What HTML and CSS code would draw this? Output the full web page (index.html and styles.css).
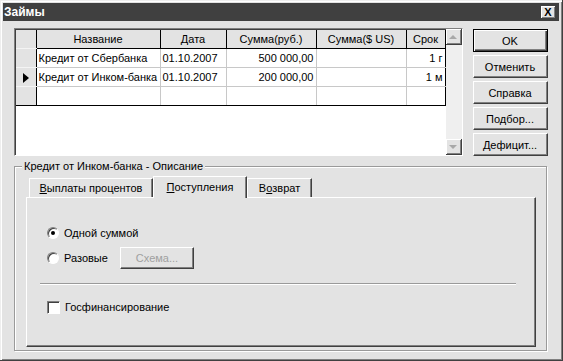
FILE: index.html
```html
<!DOCTYPE html>
<html lang="ru">
<head>
    <meta charset="UTF-8">
    <title>Займы</title>
    <link rel="stylesheet" href="styles.css">
</head>
<body>

    <div class="window">

        <div class="titlebar">
            <span class="title-text">Займы</span>
            <span class="close-btn">X</span>
        </div>

        <div class="content">

            <div class="top-row">

                <div class="grid">
                    <div class="grid-body">
                        <table class="loans">
                            <colgroup>
                                <col class="c-ind">
                                <col class="c-name">
                                <col class="c-date">
                                <col class="c-sum">
                                <col class="c-usd">
                                <col class="c-term">
                            </colgroup>
                            <tr class="head">
                                <td class="ind"></td>
                                <td>Название</td>
                                <td>Дата</td>
                                <td>Сумма(руб.)</td>
                                <td>Сумма($ US)</td>
                                <td class="last">Срок</td>
                            </tr>
                            <tr>
                                <td class="ind"></td>
                                <td>Кредит от Сбербанка</td>
                                <td>01.10.2007</td>
                                <td class="num">500 000,00</td>
                                <td></td>
                                <td class="num last">1 г</td>
                            </tr>
                            <tr>
                                <td class="ind"><span class="arrow"></span></td>
                                <td>Кредит от Инком-банка</td>
                                <td>01.10.2007</td>
                                <td class="num">200 000,00</td>
                                <td></td>
                                <td class="num last">1 м</td>
                            </tr>
                            <tr class="end">
                                <td class="ind"></td>
                                <td></td>
                                <td></td>
                                <td></td>
                                <td></td>
                                <td class="last"></td>
                            </tr>
                        </table>
                    </div>
                    <div class="scrollbar">
                        <div class="sb-btn"><span class="tri-up"></span></div>
                        <div class="sb-track"></div>
                        <div class="sb-btn"><span class="tri-down"></span></div>
                    </div>
                </div>

                <div class="buttons">
                    <div class="btn default">OK</div>
                    <div class="btn">Отменить</div>
                    <div class="btn">Справка</div>
                    <div class="btn">Подбор...</div>
                    <div class="btn">Дефицит...</div>
                </div>

            </div>

            <div class="group">
                <div class="group-label">Кредит от Инком-банка - Описание</div>

                <div class="tabs">
                    <div class="tab tab-pay"><u>В</u>ыплаты процентов</div>
                    <div class="tab active"><u>П</u>оступления</div>
                    <div class="tab tab-back">В<u>о</u>зврат</div>
                </div>

                <div class="panel">
                    <div class="option">
                        <span class="radio checked"></span>
                        <span>Одной суммой</span>
                    </div>
                    <div class="option">
                        <span class="radio"></span>
                        <span class="opt-label">Разовые</span>
                        <span class="btn small disabled">Схема...</span>
                    </div>
                    <div class="separator"></div>
                    <div class="option">
                        <span class="checkbox"></span>
                        <span>Госфинансирование</span>
                    </div>
                </div>
            </div>

        </div>

    </div>

</body>
</html>
```

FILE: styles.css
```css
body{
    margin: 0;
    background-color: #e3e3e3;
    font-family: "Liberation Sans", Arial, sans-serif;
    font-size: 11px;
    color: #000;
}

.window{
    width: 563px;
    height: 361px;
    box-sizing: border-box;
    padding: 3px 3px 0 3px;
    background-color: #e3e3e3;
    border-right: 1px solid #404040;
    border-bottom: 1px solid #404040;
    box-shadow: inset 1px 1px 0 #eeeeee, inset 2px 2px 0 #ffffff, inset -1px -1px 0 #808080;
}

/* title bar */

.titlebar{
    height: 18px;
    background-color: #404040;
    display: flex;
    align-items: center;
    justify-content: space-between;
    padding: 0 3px 0 1px;
}

.title-text{
    color: #ffffff;
    font-weight: bold;
    font-size: 12px;
}

.close-btn{
    width: 14px;
    height: 12px;
    line-height: 12px;
    text-align: center;
    font-size: 11px;
    font-weight: bold;
    background-color: #e3e3e3;
    border-right: 1px solid #404040;
    border-bottom: 1px solid #404040;
    box-shadow: inset 1px 1px 0 #ffffff, inset -1px -1px 0 #808080;
}

.content{
    padding: 7px 12px 0 11px;
}

.top-row{
    display: flex;
    gap: 10px;
}

/* grid */

.grid{
    width: 449px;
    height: 128px;
    box-sizing: border-box;
    display: flex;
    border-top: 1px solid #808080;
    border-left: 1px solid #808080;
    border-right: 1px solid #ffffff;
    border-bottom: 1px solid #ffffff;
}

.grid-body{
    flex: 1;
    background-color: #ffffff;
    border-top: 1px solid #404040;
    border-left: 1px solid #404040;
}

.loans{
    table-layout: fixed;
    border-collapse: collapse;
    width: 429px;
}

.c-ind{ width: 20px; }
.c-name{ width: 124px; }
.c-date{ width: 66px; }
.c-sum{ width: 90px; }
.c-usd{ width: 90px; }
.c-term{ width: 39px; }

.loans td{
    height: 18px;
    padding: 0 2px;
    border-right: 1px solid #c8c8c8;
    border-bottom: 1px solid #c8c8c8;
    white-space: nowrap;
    overflow: hidden;
    text-overflow: clip;
}

.loans .head td{
    background-color: #e3e3e3;
    text-align: center;
    border-right: 1px solid #000000;
    border-bottom: 1px solid #000000;
}

.loans td.ind{
    background-color: #e3e3e3;
    border-right: 1px solid #000000;
    border-bottom: 1px solid #f4f4f4;
    padding: 0;
    text-align: center;
}

.loans td.last{
    border-right: 1px solid #000000;
}

.loans .end td{
    border-bottom: 1px solid #000000;
}

.loans td.num{
    text-align: right;
}

.arrow{
    display: inline-block;
    width: 0;
    height: 0;
    border-top: 5px solid transparent;
    border-bottom: 5px solid transparent;
    border-left: 6px solid #000000;
    vertical-align: middle;
}

.scrollbar{
    width: 16px;
    display: flex;
    flex-direction: column;
}

.sb-track{
    flex: 1;
    background-color: #efefef;
}

.sb-btn{
    height: 16px;
    box-sizing: border-box;
    background-color: #e3e3e3;
    border-right: 1px solid #404040;
    border-bottom: 1px solid #404040;
    box-shadow: inset 1px 1px 0 #ffffff, inset -1px -1px 0 #808080;
    display: flex;
    align-items: center;
    justify-content: center;
}

.tri-up{
    border-left: 4px solid transparent;
    border-right: 4px solid transparent;
    border-bottom: 4px solid #a8a8a8;
}

.tri-down{
    border-left: 4px solid transparent;
    border-right: 4px solid transparent;
    border-top: 4px solid #a8a8a8;
}

/* buttons */

.buttons{
    display: flex;
    flex-direction: column;
    gap: 3px;
    padding-top: 1px;
}

.btn{
    width: 75px;
    height: 23px;
    box-sizing: border-box;
    display: flex;
    align-items: center;
    justify-content: center;
    background-color: #e3e3e3;
    border-top: 1px solid #ffffff;
    border-left: 1px solid #ffffff;
    border-right: 1px solid #404040;
    border-bottom: 1px solid #404040;
    box-shadow: inset -1px -1px 0 #808080;
}

.btn.default{
    border: 1px solid #000000;
    box-shadow: inset 1px 1px 0 #ffffff, inset -1px -1px 0 #404040, inset -2px -2px 0 #808080;
}

.btn.small{
    width: 74px;
    height: 22px;
}

.btn.disabled{
    color: #a0a0a0;
}

/* group box */

.group{
    margin-top: 10px;
    width: 533px;
    height: 185px;
    box-sizing: border-box;
    border: 1px solid #9a9a9a;
    box-shadow: inset 1px 1px 0 #ffffff, 1px 1px 0 #ffffff;
    padding: 0 10px 0 11px;
}

.group-label{
    display: table;
    margin: -7px 0 0 -4px;
    padding: 0 2px;
    background-color: #e3e3e3;
    line-height: 13px;
}

.tabs{
    display: flex;
    margin-top: 4px;
    padding-left: 3px;
    height: 20px;
    align-items: flex-end;
}

.tab{
    height: 19px;
    box-sizing: border-box;
    padding: 0;
    display: flex;
    align-items: center;
    justify-content: center;
    white-space: nowrap;
    border-top: 1px solid #ffffff;
    border-left: 1px solid #ffffff;
    border-right: 1px solid #404040;
    box-shadow: inset -1px 0 0 #808080;
}

.tab-pay{
    width: 124px;
}

.tab.active{
    height: 22px;
    margin-bottom: -1px;
    width: 94px;
    padding: 0 0 2px 0;
    position: relative;
    background-color: #e3e3e3;
}

.tab-back{
    width: 65px;
}

.panel{
    height: 150px;
    box-sizing: border-box;
    border-top: 1px solid #ffffff;
    border-left: 1px solid #ffffff;
    border-right: 1px solid #404040;
    border-bottom: 1px solid #404040;
    box-shadow: inset -1px -1px 0 #808080;
    padding: 28px 20px 0 20px;
}

.option{
    display: flex;
    align-items: center;
    gap: 5px;
    height: 14px;
    margin-bottom: 11px;
}

.opt-label{
    width: 51px;
}

.radio{
    width: 12px;
    height: 12px;
    box-sizing: border-box;
    border-radius: 50%;
    background-color: #ffffff;
    border-top: 1px solid #808080;
    border-left: 1px solid #808080;
    border-right: 1px solid #ffffff;
    border-bottom: 1px solid #ffffff;
    box-shadow: inset 1px 1px 0 #404040;
    display: flex;
    align-items: center;
    justify-content: center;
}

.radio.checked::after{
    content: "";
    width: 4px;
    height: 4px;
    border-radius: 50%;
    background-color: #000000;
}

.checkbox{
    width: 13px;
    height: 13px;
    box-sizing: border-box;
    background-color: #ffffff;
    border-top: 1px solid #808080;
    border-left: 1px solid #808080;
    border-right: 1px solid #ffffff;
    border-bottom: 1px solid #ffffff;
    box-shadow: inset 1px 1px 0 #404040;
}

.separator{
    height: 1px;
    margin: 18px -1px 15px -7px;
    background-color: #9a9a9a;
    border-bottom: 1px solid #ffffff;
}
```
